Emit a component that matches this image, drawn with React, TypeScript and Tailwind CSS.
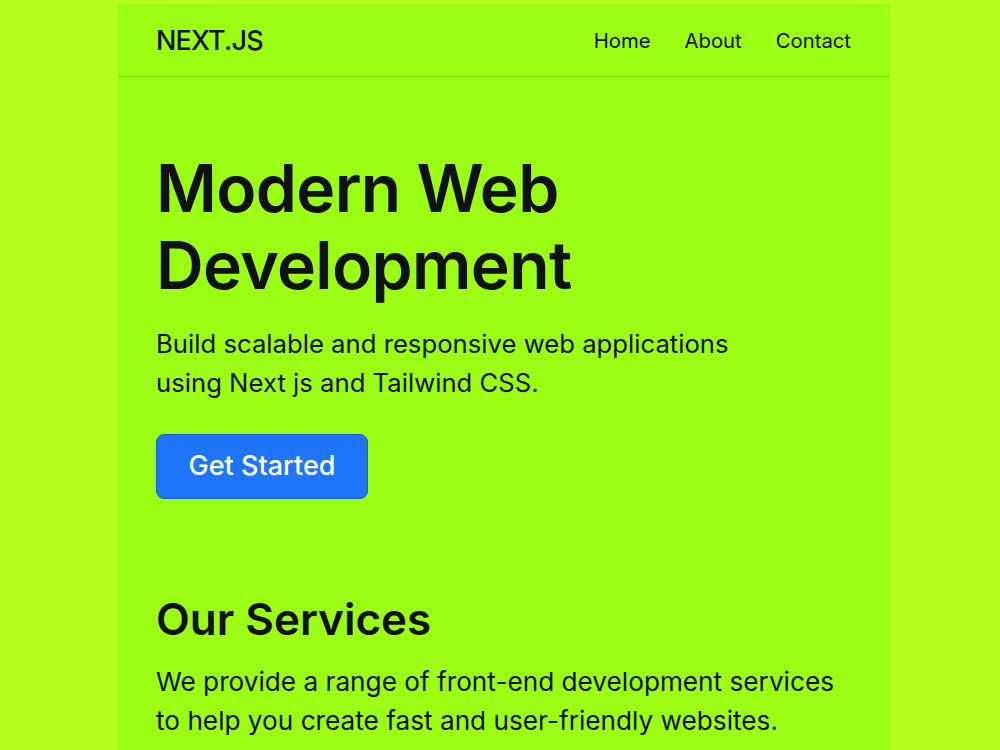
export default function App() {
  return (
    <div
      className="min-h-[750px] w-full bg-[#b5fd1c] flex justify-center pt-[4px] pl-[8px]"
      style={{ fontFamily: "Inter, 'Noto Sans', sans-serif" }}
    >
      <div className="w-[772px] bg-[#9cfd14] text-[#111]">
        <header className="h-[73px] flex items-center justify-between px-[38px] border-b border-[#86e010]">
          <div className="text-[27px] tracking-[-0.03em] font-medium text-[#111] pt-[2px]">NEXT.JS</div>
          <nav className="flex items-center gap-[34px] text-[20.3px] pr-[1px] pt-[2px]">
            <a>Home</a>
            <a>About</a>
            <a>Contact</a>
          </nav>
        </header>

        <section className="px-[38px] pt-[73px]">
          <h1 className="text-[66px] leading-[77px] font-semibold tracking-[-0.01em]">
            Modern Web
            <br />
            Development
          </h1>
          <p className="mt-[20px] text-[25.7px] leading-[39px] w-[640px]">
            Build scalable and responsive web applications using Next js and Tailwind CSS.
          </p>
          <button className="mt-[32px] w-[212px] h-[65px] rounded-[8px] bg-[#1f75f8] border border-[#1a5fd0] text-white text-[27px] font-medium">
            Get Started
          </button>
        </section>

        <section className="px-[38px] pt-[92px] pb-[40px]">
          <h2 className="text-[44px] leading-[56px] font-semibold">Our Services</h2>
          <p className="mt-[15px] text-[26.2px] leading-[39px] w-[700px]">
            We provide a range of front-end development services to help you create fast and user-friendly websites.
          </p>
        </section>
      </div>
    </div>
  );
}
